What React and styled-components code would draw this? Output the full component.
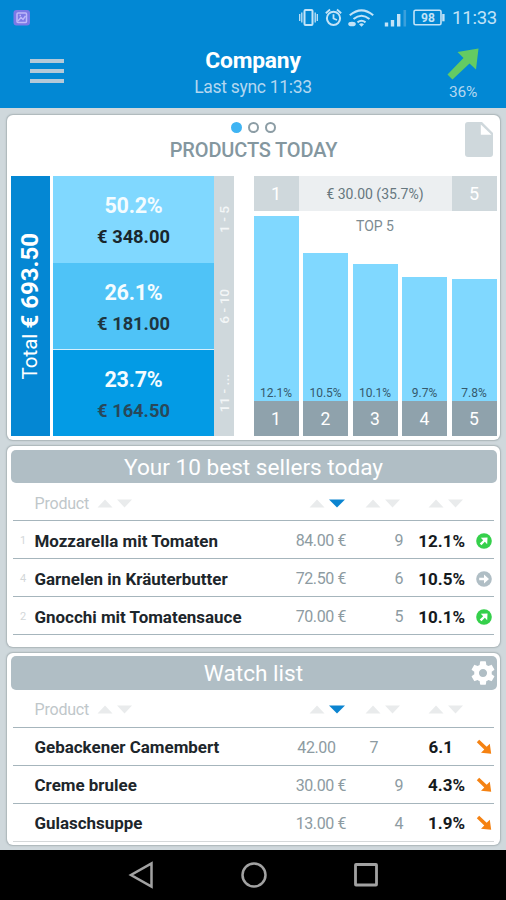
import React from 'react';
import styled, { createGlobalStyle } from 'styled-components';

const GlobalStyle = createGlobalStyle`
    * {
        box-sizing: border-box;
    }
    body {
        margin: 0;
        background: #000;
        font-family: Roboto, 'Liberation Sans', sans-serif;
    }
`;

const Screen = styled.div`
    width: 506px;
    height: 900px;
    display: flex;
    flex-direction: column;
    background: #cfd8dc;
    overflow: hidden;
`;

// Header
const Header = styled.header`
    height: 108px;
    flex: none;
    background: #0288d4;
    color: #fff;
`;

const StatusBar = styled.div`
    height: 36px;
    padding: 0 8px 0 13px;
    display: flex;
    align-items: center;
    justify-content: space-between;
    color: #c3e3f7;
`;

const StatusIcons = styled.div`
    display: flex;
    align-items: center;
`;

const Clock = styled.span`
    width: 46px;
    margin-left: 6px;
    font-size: 18.5px;
    line-height: 36px;
    letter-spacing: -0.2px;
    white-space: nowrap;
`;

const TitleBar = styled.div`
    height: 72px;
    display: grid;
    grid-template-columns: 94px 1fr 94px;
`;

const MenuButton = styled.div`
    display: flex;
    flex-direction: column;
    gap: 6.3px;
    padding: 22.5px 0 0 29.5px;
`;

const MenuLine = styled.span`
    width: 34.5px;
    height: 4px;
    background: #b4c9d8;
`;

const Heading = styled.div`
    text-align: center;
    padding-top: 11px;
`;

const Company = styled.div`
    font-size: 22.8px;
    line-height: 28px;
    font-weight: 700;
    letter-spacing: -0.2px;
`;

const LastSync = styled.div`
    font-size: 17.5px;
    line-height: 25px;
    color: #b3d7f0;
    letter-spacing: -0.3px;
`;

const Trend = styled.div`
    display: flex;
    flex-direction: column;
    align-items: center;
    padding: 12px 0 0 8px;
    font-size: 15.5px;
    line-height: 25px;
    letter-spacing: -0.3px;
    color: #b3d7f0;
`;

// Cards
const Content = styled.main`
    flex: 1;
    padding: 6.5px 6px 5px 7px;
    display: flex;
    flex-direction: column;
    gap: 6px;
`;

const Card = styled.section`
    height: ${(props) => props.$height}px;
    padding: 3.5px;
    background: #fff;
    border-radius: 6px;
    box-shadow: 0 0 1.5px 0.5px #aab4b8;
`;

const ProductsHead = styled.div`
    height: 58.4px;
    display: grid;
    grid-template-columns: 32px 1fr 32px;
`;

const HeadCenter = styled.div`
    display: flex;
    flex-direction: column;
    align-items: center;
    padding-top: 3.5px;
`;

const Dots = styled.div`
    display: flex;
    gap: 6px;
`;

const Dot = styled.span`
    width: 11px;
    height: 11px;
    border-radius: 50%;
    border: 2px solid ${(props) => (props.$active ? '#3fb4f3' : '#8c9da5')};
    background: ${(props) => (props.$active ? '#3fb4f3' : '#fff')};
`;

const CardTitle = styled.h2`
    margin: 4px 0 0;
    font-size: 20px;
    line-height: 26px;
    font-weight: 500;
    color: #84979f;
    letter-spacing: -0.15px;
`;

const DocumentSlot = styled.div`
    padding: 4px 4px 0 0;
    display: flex;
    justify-content: flex-end;
`;

const Charts = styled.div`
    display: flex;
    height: 260px;
`;

const Total = styled.div`
    width: 39px;
    margin-right: 3.5px;
    background: #0487d3;
    color: #fff;
    display: flex;
    align-items: center;
    justify-content: center;
`;

const Vertical = styled.span`
    writing-mode: vertical-rl;
    transform: rotate(180deg);
    white-space: nowrap;
`;

const TotalText = styled(Vertical)`
    font-size: 20.5px;
    line-height: 26px;

    b {
        font-size: 24px;
        font-weight: 700;
    }
`;

const Shares = styled.div`
    width: 161px;
    display: flex;
    flex-direction: column;
`;

const Share = styled.div`
    flex: 1;
    background: ${(props) => props.$color};
    border-bottom: ${(props) => (props.$divider ? '1.5px solid #d5effd' : 'none')};
    text-align: center;
    padding-top: 15px;
`;

const Percent = styled.div`
    font-size: 21.5px;
    line-height: 30px;
    font-weight: 700;
    letter-spacing: -0.2px;
    color: #f4fcff;
`;

const Amount = styled.div`
    font-size: 18.3px;
    line-height: 32px;
    font-weight: 700;
    color: ${(props) => props.$color};
`;

const Ranges = styled.div`
    width: 20px;
    margin-right: 19.5px;
    background: #cfd8dc;
    display: flex;
    flex-direction: column;
    color: #f3f6f7;
    font-size: 13.7px;
    font-weight: 500;
    line-height: 20px;
`;

const Range = styled.div`
    flex: 1;
    display: flex;
    align-items: center;
    justify-content: center;
`;

const TopFive = styled.div`
    width: 243px;
    display: flex;
    flex-direction: column;
`;

const Selection = styled.div`
    height: 34.5px;
    display: flex;
    line-height: 36px;
    text-align: center;
`;

const Edge = styled.div`
    width: 45px;
    background: #cfd8dc;
    color: #fff;
    font-size: 18px;
`;

const Selected = styled.div`
    flex: 1;
    background: #eceff1;
    color: #66777f;
    font-size: 14px;
`;

const BarArea = styled.div`
    flex: 1;
    position: relative;
    display: flex;
    justify-content: space-between;
    align-items: flex-end;
`;

const TopLabel = styled.div`
    position: absolute;
    top: 5px;
    left: 0;
    right: 0;
    text-align: center;
    font-size: 14px;
    line-height: 20px;
    color: #7c8b92;
`;

const BarColumn = styled.div`
    width: 45px;
    text-align: center;
`;

const Bar = styled.div`
    display: flex;
    align-items: flex-end;
    justify-content: center;
    background: #80d8ff;
    color: #35596c;
    font-size: 12px;
    line-height: 16px;
`;

const BarIndex = styled.div`
    height: 35px;
    background: #8fa2ac;
    color: #fff;
    font-size: 17.5px;
    line-height: 36px;
`;

// Lists
const ListHeader = styled.div`
    position: relative;
    height: 33.5px;
    border-radius: 5px;
    background: #b0bec5;
    color: #fff;
    text-align: center;
    font-size: 22.6px;
    line-height: 35px;
`;

const GearSlot = styled.span`
    position: absolute;
    right: 0;
    top: 2.5px;
    line-height: 0;
`;

const Table = styled.div`
    padding: 0 2.5px;
`;

const Row = styled.div`
    height: ${(props) => (props.$head ? 37.8 : 38)}px;
    padding-top: ${(props) => (props.$head ? 3 : 2)}px;
    display: grid;
    grid-template-columns: 21.5px 1fr 60px 57px 62px 29px;
    align-items: center;
    border-bottom: 1.5px solid ${(props) => props.$line || '#a6b5bc'};
`;

const Rank = styled.span`
    padding-left: 7px;
    font-size: 11px;
    color: #d3d7d9;
`;

const ColumnName = styled.span`
    display: flex;
    align-items: center;
    gap: 8px;
    font-size: 16px;
    letter-spacing: -0.2px;
    color: #bfc7ca;
`;

const Name = styled.span`
    font-size: 16.95px;
    font-weight: 700;
    color: #1d262b;
    white-space: nowrap;
`;

const Sort = styled.span`
    display: flex;
    justify-content: flex-end;
    padding-right: ${(props) => props.$inset || 0}px;
`;

const Value = styled.span`
    text-align: right;
    padding-right: ${(props) => props.$inset || 0}px;
    font-size: 16px;
    letter-spacing: -0.4px;
    color: #8d9ba2;
    white-space: nowrap;
`;

const Rate = styled(Value)`
    font-size: 17px;
    font-weight: 700;
    letter-spacing: 0;
    color: #151a1d;
`;

const IconCell = styled.span`
    padding-left: 8px;
    line-height: 0;
    text-align: center;
`;

const NavBar = styled.nav`
    height: 50px;
    flex: none;
    background: #000;
    display: flex;
    justify-content: space-between;
    align-items: center;
    padding: 0 127px 0 128px;
`;

const shares = [
    { percent: '50.2%', amount: '€ 348.00', color: '#80d8ff', text: '#19262c' },
    { percent: '26.1%', amount: '€ 181.00', color: '#4fc3f7', text: '#1e363f', divider: true },
    { percent: '23.7%', amount: '€ 164.50', color: '#039be5', text: '#28485a' },
];

const bars = [
    { height: 185.5, label: '12.1%' },
    { height: 148, label: '10.5%' },
    { height: 137.5, label: '10.1%' },
    { height: 124, label: '9.7%' },
    { height: 122.5, label: '7.8%' },
];

const bestSellers = [
    { rank: 1, name: 'Mozzarella mit Tomaten', price: '84.00 €', qty: 9, rate: '12.1%', trend: 'up' },
    { rank: 4, name: 'Garnelen in Kräuterbutter', price: '72.50 €', qty: 6, rate: '10.5%', trend: 'flat' },
    { rank: 2, name: 'Gnocchi mit Tomatensauce', price: '70.00 €', qty: 5, rate: '10.1%', trend: 'up' },
];

const watchList = [
    { name: 'Gebackener Camembert', price: '42.00', qty: 7, rate: '6.1', trend: 'down', insets: [10.5, 25, 12] },
    { name: 'Creme brulee', price: '30.00 €', qty: 9, rate: '4.3%', trend: 'down' },
    { name: 'Gulaschsuppe', price: '13.00 €', qty: 4, rate: '1.9%', trend: 'down' },
];

const SortArrows = ({ active }) => (
    <svg width="36" height="9" viewBox="0 0 36 9">
        <path d="M0.5 8.5L8 0.5L15.5 8.5Z" fill="#e9ebec" />
        <path d={active ? 'M20 0.5H36L28 8.5Z' : 'M20 0.5H35L27.5 8.5Z'} fill={active ? '#0b84d0' : '#e9ebec'} />
    </svg>
);

const TrendIcon = ({ type }) => {
    if (type === 'down') {
        return (
            <svg width="16" height="16" viewBox="0 0 16 16">
                <path d="M0.8 3.2L3.2 0.8L10.7 7.8L13.8 4.8L15.2 14.8L5 13.8L8.3 10.5Z" fill="#f58212" />
            </svg>
        );
    }
    return (
        <svg width="16" height="16" viewBox="0 0 16 16">
            <circle cx="8" cy="8" r="7.8" fill={type === 'up' ? '#35d04b' : '#b0bec5'} />
            <g transform={type === 'up' ? 'rotate(-45 8 8)' : undefined}>
                <path d="M3.2 6.8H8V3.5L13 8L8 12.5V9.2H3.2Z" fill="#fff" />
            </g>
        </svg>
    );
};

const StatusGlyphs = () => (
    <svg width="147" height="22" viewBox="0 0 147 22" fill="none" stroke="#c3e3f7">
        {/* vibrate */}
        <rect x="5.5" y="3" width="8" height="15" rx="1" strokeWidth="2" />
        <path d="M2.8 5.5V15.5M0.7 7V14M16.2 5.5V15.5M18.3 7V14" strokeWidth="1.3" />
        {/* alarm */}
        <circle cx="34.5" cy="11.3" r="6.6" strokeWidth="2" />
        <path d="M34.5 7.3V11.5L38 13M26.8 6.2L31 2.5M38 2.5L42.2 6.2" strokeWidth="1.8" />
        {/* wifi */}
        <path d="M50.8 8.2Q62.5 -1.5 74.2 8.2M54.5 12Q62.5 5.5 70.5 12M58.5 15.3Q62.5 12.2 66.5 15.3" strokeWidth="2.1" />
        <path d="M60 17.2Q62.5 15.5 65 17.2L62.5 19.7Z" fill="#c3e3f7" stroke="none" />
        <ellipse cx="53" cy="17" rx="3.8" ry="2.3" fill="#c3e3f7" stroke="none" />
        {/* signal */}
        <path d="M87.5 15.5V19.5M93.5 13V19.5M99.7 7V19.5" strokeWidth="3.4" />
        <path d="M105.8 3V19.5" strokeWidth="2.6" stroke="#3aa0dc" />
        {/* battery */}
        <rect x="115" y="3.3" width="27" height="14.5" rx="1.5" strokeWidth="1.6" />
        <path d="M144.4 7V14.3" strokeWidth="2.4" />
        <text x="129" y="14.9" textAnchor="middle" fontSize="12" fontWeight="700" fill="#c3e3f7" stroke="none">98</text>
    </svg>
);

const Gear = () => (
    <svg width="28" height="28" viewBox="0 0 24 24">
        <path
            fill="#fff"
            d="M19.43 12.98c.04-.32.07-.64.07-.98s-.03-.66-.07-.98l2.11-1.65c.19-.15.24-.42.12-.64l-2-3.46c-.12-.22-.39-.3-.61-.22l-2.49 1c-.52-.4-1.08-.73-1.69-.98l-.38-2.65C14.46 2.18 14.25 2 14 2h-4c-.25 0-.46.18-.49.42l-.38 2.65c-.61.25-1.17.59-1.69.98l-2.49-1c-.23-.09-.49 0-.61.22l-2 3.46c-.13.22-.07.49.12.64l2.11 1.65c-.04.32-.07.65-.07.98s.03.66.07.98l-2.11 1.65c-.19.15-.24.42-.12.64l2 3.46c.12.22.39.3.61.22l2.49-1c.52.4 1.08.73 1.69.98l.38 2.65c.03.24.24.42.49.42h4c.25 0 .46-.18.49-.42l.38-2.65c.61-.25 1.17-.59 1.69-.98l2.49 1c.23.09.49 0 .61-.22l2-3.46c.12-.22.07-.49-.12-.64l-2.11-1.65zM12 15.5c-1.93 0-3.5-1.57-3.5-3.5s1.57-3.5 3.5-3.5 3.5 1.57 3.5 3.5-1.57 3.5-3.5 3.5z"
        />
    </svg>
);

const ProductTable = ({ rows, lastLine }) => (
    <Table>
        <Row $head>
            <span />
            <ColumnName>
                Product
                <SortArrows />
            </ColumnName>
            <Sort $inset={1}><SortArrows active /></Sort>
            <Sort $inset={2}><SortArrows /></Sort>
            <Sort $inset={1}><SortArrows /></Sort>
            <span />
        </Row>
        {rows.map((row, i) => {
            const [a, b, c] = row.insets || [0, 0, 0];
            return (
                <Row key={row.name} $line={i === rows.length - 1 ? lastLine : undefined}>
                    <Rank>{row.rank}</Rank>
                    <Name>{row.name}</Name>
                    <Value $inset={a}>{row.price}</Value>
                    <Value $inset={b}>{row.qty}</Value>
                    <Rate $inset={c}>{row.rate}</Rate>
                    <IconCell><TrendIcon type={row.trend} /></IconCell>
                </Row>
            );
        })}
    </Table>
);

const App = () => {
    return (
        <Screen>
            <GlobalStyle />
            <Header>
                <StatusBar>
                    <svg width="18" height="18" viewBox="0 0 18 18">
                        <rect x="0.5" y="1" width="16.5" height="15.5" rx="3" fill="#7d78e6" />
                        <rect x="4" y="4" width="9.5" height="9.5" rx="1" fill="none" stroke="#c0b9fa" strokeWidth="1.5" />
                        <path d="M5 12L8 8.5L10 10.5L12.5 7M6.5 6.5H8" fill="none" stroke="#c0b9fa" strokeWidth="1.4" />
                    </svg>
                    <StatusIcons>
                        <StatusGlyphs />
                        <Clock>11:33</Clock>
                    </StatusIcons>
                </StatusBar>
                <TitleBar>
                    <MenuButton>
                        <MenuLine />
                        <MenuLine />
                        <MenuLine />
                    </MenuButton>
                    <Heading>
                        <Company>Company</Company>
                        <LastSync>Last sync 11:33</LastSync>
                    </Heading>
                    <Trend>
                        <svg width="32" height="32" viewBox="0 0 32 32">
                            <path d="M31.5 0.5L29 21.5L22.5 15.5L5.5 31.5L0.5 26.5L16.5 10L10.5 4Z" fill="#64cb62" />
                        </svg>
                        36%
                    </Trend>
                </TitleBar>
            </Header>
            <Content>
                <Card $height={325.9}>
                    <ProductsHead>
                        <span />
                        <HeadCenter>
                            <Dots>
                                <Dot $active />
                                <Dot />
                                <Dot />
                            </Dots>
                            <CardTitle>PRODUCTS TODAY</CardTitle>
                        </HeadCenter>
                        <DocumentSlot>
                            <svg width="28" height="35" viewBox="0 0 28 35">
                                <path d="M3 0H17L28 11V32Q28 35 25 35H3Q0 35 0 32V3Q0 0 3 0Z" fill="#cfd8dc" />
                                <path d="M15.8 2.5V12.7H26.5Z" fill="#fff" />
                            </svg>
                        </DocumentSlot>
                    </ProductsHead>
                    <Charts>
                        <Total>
                            <TotalText>Total <b>€ 693.50</b></TotalText>
                        </Total>
                        <Shares>
                            {shares.map((share) => (
                                <Share key={share.percent} $color={share.color} $divider={share.divider}>
                                    <Percent>{share.percent}</Percent>
                                    <Amount $color={share.text}>{share.amount}</Amount>
                                </Share>
                            ))}
                        </Shares>
                        <Ranges>
                            <Range><Vertical>1 - 5</Vertical></Range>
                            <Range><Vertical>6 - 10</Vertical></Range>
                            <Range><Vertical>11 - ...</Vertical></Range>
                        </Ranges>
                        <TopFive>
                            <Selection>
                                <Edge>1</Edge>
                                <Selected>€ 30.00 (35.7%)</Selected>
                                <Edge>5</Edge>
                            </Selection>
                            <BarArea>
                                <TopLabel>TOP 5</TopLabel>
                                {bars.map((bar, i) => (
                                    <BarColumn key={bar.label}>
                                        <Bar style={{ height: bar.height }}>{bar.label}</Bar>
                                        <BarIndex>{i + 1}</BarIndex>
                                    </BarColumn>
                                ))}
                            </BarArea>
                        </TopFive>
                    </Charts>
                </Card>
                <Card $height={200.5}>
                    <ListHeader>Your 10 best sellers today</ListHeader>
                    <ProductTable rows={bestSellers} />
                </Card>
                <Card $height={192}>
                    <ListHeader>
                        Watch list
                        <GearSlot><Gear /></GearSlot>
                    </ListHeader>
                    <ProductTable rows={watchList} lastLine="#d5d8d9" />
                </Card>
            </Content>
            <NavBar>
                <svg width="26" height="28" viewBox="0 0 26 28" fill="none" stroke="#a2a2a2" strokeWidth="2.5">
                    <path d="M23.5 2.5V25.5L3 14Z" />
                </svg>
                <svg width="28" height="28" viewBox="0 0 28 28" fill="none" stroke="#a2a2a2" strokeWidth="2.5">
                    <circle cx="14" cy="14" r="11.5" />
                </svg>
                <svg width="26" height="26" viewBox="0 0 26 26" fill="none" stroke="#a2a2a2" strokeWidth="2.8">
                    <rect x="2.5" y="2.5" width="21" height="20.5" rx="0.5" />
                </svg>
            </NavBar>
        </Screen>
    );
};

export default App;
